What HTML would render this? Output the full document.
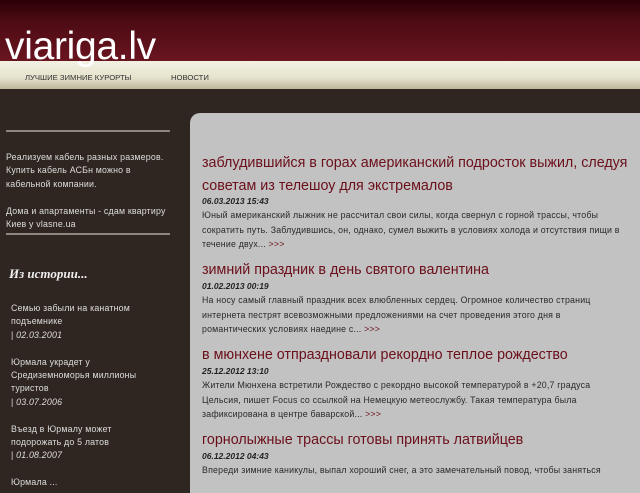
<!DOCTYPE html>
<html><head><meta charset="utf-8"><style>
body{margin:0;width:640px;height:480px;overflow:hidden;background:#2f2621;font-family:"Liberation Sans",sans-serif;position:relative}
#hd{position:absolute;left:0;top:0;width:640px;height:61px;background:linear-gradient(#2a0006,#4a0a12 30%,#6a1520)}
#logo{position:absolute;left:5px;top:25px;font-size:39px;color:#fff;letter-spacing:-0.3px;line-height:44px;z-index:2}
#nav{position:absolute;left:0;top:61px;width:640px;height:28px;background:linear-gradient(#f3f1e3,#e6e2cc 60%,#bdb69a)}
#nav span{position:absolute;top:12px;font-size:7.7px;color:#333}
.hr{position:absolute;left:6px;width:164px;height:2px;background:#8f8680}
.p{position:absolute;line-height:13.4px}
#main{position:absolute;left:190px;top:113px;width:450px;height:380px;background:#c2c2c2;border-radius:10px 0 0 0;overflow:hidden}
.t{position:absolute;left:12px;font-size:14.3px;color:#6b0f1a;line-height:23px;width:435px}
.d{position:absolute;left:12px;font-size:8.5px;font-weight:bold;font-style:italic;color:#222}
.x{position:absolute;left:12px;font-size:8.8px;letter-spacing:0.2px;color:#2a2a2a;line-height:14.5px;white-space:nowrap}
.x b{font-weight:normal;color:#6b0f1a}
</style></head><body>
<div id="hd"></div>
<div id="logo">viariga.lv</div>
<div id="nav"><span style="left:25px">ЛУЧШИЕ ЗИМНИЕ КУРОРТЫ</span><span style="left:171px">НОВОСТИ</span></div>
<div class="hr" style="top:130px"></div>
<div class="p" style="left:6px;top:151px;color:#ddd;font-size:8.8px;letter-spacing:0.2px;width:175px">Реализуем кабель разных размеров.<br>Купить кабель АСБн можно в<br>кабельной компании.<br><br>Дома и апартаменты - сдам квартиру<br>Киев у vlasne.ua</div>
<div class="hr" style="top:233px"></div>
<div class="p" style="left:9px;top:267px;font-family:'Liberation Serif',serif;font-weight:bold;font-style:italic;font-size:13px;color:#eee">Из истории...</div>
<div class="p" style="left:11px;top:302px;color:#ddd;font-size:8.8px;letter-spacing:0.2px;width:170px">Семью забыли на канатном<br>подъемнике<br>| <i>02.03.2001</i><br><br>Юрмала украдет у<br>Средиземноморья миллионы<br>туристов<br>| <i>03.07.2006</i><br><br>Въезд в Юрмалу может<br>подорожать до 5 латов<br>| <i>01.08.2007</i><br><br>Юрмала ...</div>
<div id="main">
<div class="t" style="top:39px">заблудившийся в горах американский подросток выжил, следуя советам из телешоу для экстремалов</div>
<div class="d" style="top:83px">06.03.2013 15:43</div>
<div class="x" style="top:95px">Юный американский лыжник не рассчитал свои силы, когда свернул с горной трассы, чтобы<br>сократить путь. Заблудившись, он, однако, сумел выжить в условиях холода и отсутствия пищи в<br>течение двух... <b>&gt;&gt;&gt;</b></div>
<div class="t" style="top:146px">зимний праздник в день святого валентина</div>
<div class="d" style="top:168px">01.02.2013 00:19</div>
<div class="x" style="top:180px">На носу самый главный праздник всех влюбленных сердец. Огромное количество страниц<br>интернета пестрят всевозможными предложениями на счет проведения этого дня в<br>романтических условиях наедине с... <b>&gt;&gt;&gt;</b></div>
<div class="t" style="top:231px">в мюнхене отпраздновали рекордно теплое рождество</div>
<div class="d" style="top:253px">25.12.2012 13:10</div>
<div class="x" style="top:265px">Жители Мюнхена встретили Рождество с рекордно высокой температурой в +20,7 градуса<br>Цельсия, пишет Focus со ссылкой на Немецкую метеослужбу. Такая температура была<br>зафиксирована в центре баварской... <b>&gt;&gt;&gt;</b></div>
<div class="t" style="top:316px">горнолыжные трассы готовы принять латвийцев</div>
<div class="d" style="top:338px">06.12.2012 04:43</div>
<div class="x" style="top:350px">Впереди зимние каникулы, выпал хороший снег, а это замечательный повод, чтобы заняться</div>
</div>
</body></html>
